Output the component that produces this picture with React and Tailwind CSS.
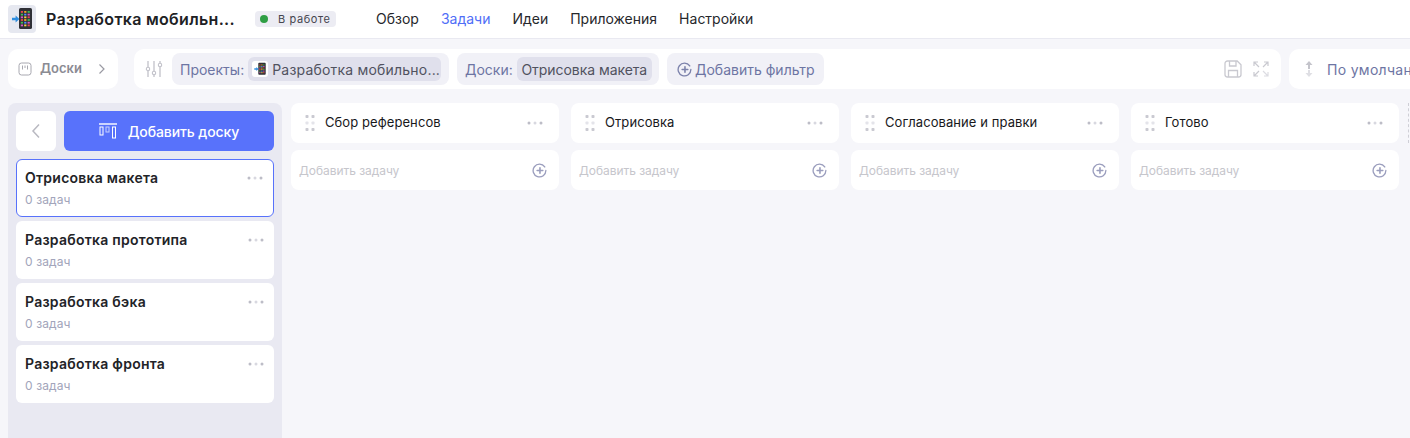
import React from 'react';

const boards = ['Отрисовка макета', 'Разработка прототипа', 'Разработка бэка', 'Разработка фронта'];
const columns = ['Сбор референсов', 'Отрисовка', 'Согласование и правки', 'Готово'];
const nav = ['Обзор', 'Задачи', 'Идеи', 'Приложения', 'Настройки'];

function PhoneEmoji({ className }) {
  const colors = ['#e5484d', '#f5a623', '#3fb950', '#4c8dff', '#d957c5', '#f5d742'];
  const cells = [];
  for (let r = 0; r < 6; r++) {
    for (let c = 0; c < 3; c++) {
      cells.push(
        <rect key={`${r}-${c}`} x={12.8 + c * 3.4} y={6 + r * 2.7} width="2.2" height="1.8" fill={colors[(r * 2 + c) % 6]} />
      );
    }
  }
  return (
    <svg viewBox="0 0 28 28" className={className}>
      <rect x="11" y="3" width="13" height="21" rx="1.6" fill="#2f3036" />
      {cells}
      <path d="M4 12.7h3.6V10.4L11.4 14l-3.8 3.6v-2.3H4z" fill="#2f8ee0" />
    </svg>
  );
}

function Dots({ className = '' }) {
  return (
    <svg viewBox="0 0 16 4" className={`w-4 h-1 ${className}`}>
      <circle cx="2" cy="2" r="1.5" fill="#bdbdc7" />
      <circle cx="8" cy="2" r="1.5" fill="#d8d8e0" />
      <circle cx="14" cy="2" r="1.5" fill="#bdbdc7" />
    </svg>
  );
}

function Grip() {
  return (
    <svg viewBox="0 0 10 16" className="w-[10px] h-4">
      {[1.5, 8, 14.5].map((y, i) =>
        [2, 8].map((x) => <rect key={`${x}-${y}`} x={x - 1.5} y={y - 1.5} width="3" height="3" rx="0.8" fill={i === 1 ? '#e4e4ea' : '#cacad2'} />)
      )}
    </svg>
  );
}

function PlusCircle({ className, color = '#9a9dbd' }) {
  return (
    <svg viewBox="0 0 16 16" fill="none" className={className}>
      <path d="M13.6 4.2A6.8 6.8 0 1 0 14.800 8" stroke={color} strokeWidth="1.4" strokeLinecap="round" />
      <path d="M8.500 5v6M5.500 8h6" stroke={color} strokeWidth="1.7" strokeLinecap="round" />
    </svg>
  );
}

export default function App() {
  return (
    <div className="w-[1410px] h-[438px] overflow-hidden flex flex-col bg-[#f6f6fa] font-['Inter',sans-serif]">
      {/* Header */}
      <header className="h-[39px] shrink-0 bg-white border-b border-[#e9e9f1] flex items-center pl-2">
        <div className="w-7 h-7 rounded bg-[#e6e8f0] shrink-0">
          <PhoneEmoji className="w-7 h-7" />
        </div>
        <h1 className="ml-2.5 w-[189px] text-base leading-5 font-semibold tracking-[0.3px] text-[#202124] whitespace-nowrap">Разработка мобильн...</h1>
        <div className="ml-[20px] w-[81px] h-4 rounded bg-[#ececf3] flex items-center pl-[5px] text-[11px] tracking-[0.6px] text-[#45464f]">
          <span className="w-2 h-2 rounded-full bg-[#2f9e44]" />
          <span className="ml-[10px]">В работе</span>
        </div>
        <nav className="ml-10 flex gap-[22px] text-[14px] leading-5 text-[#26272b]">
          {nav.map((item) => (
            <span key={item} className={item === 'Задачи' ? 'text-[#4f6ef7]' : ''}>{item}</span>
          ))}
        </nav>
      </header>

      {/* Toolbar */}
      <div className="mt-2.5 h-10 shrink-0 flex pl-2">
        <div className="w-[110px] shrink-0 rounded-[10px] bg-white flex items-center pl-[10px] text-[13px] font-semibold text-[#8b8b93]">
          <svg viewBox="0 0 14 14" fill="none" className="w-[14px] h-[14px]">
            <rect x="1" y="1" width="12" height="12" rx="2.5" stroke="#a8a8b0" strokeWidth="1" />
            <path d="M4.500 3.500v4M7 3.500v2.500M9.500 3.500v4" stroke="#a8a8b0" strokeWidth="1" />
          </svg>
          <span className="ml-2">Доски</span>
          <svg viewBox="0 0 8 12" fill="none" className="ml-4 w-2 h-3">
            <path d="M1.500 1.500 6 6l-4.500 4.500" stroke="#9a9aa3" strokeWidth="1.2" />
          </svg>
        </div>

        <div className="ml-4 w-[1147px] shrink-0 rounded-[10px] bg-white flex items-center pl-[11px] pr-[12px] text-[14px] text-[#6d75a3]">
          <svg viewBox="0 0 18 18" fill="none" className="w-[18px] h-[18px] shrink-0">
            <path d="M3 1v6M3 11v6M9 1v10M9 15v2M15 1v2M15 7v10" stroke="#c2c2ca" strokeWidth="1.3" />
            <circle cx="3" cy="9" r="1.7" stroke="#c2c2ca" strokeWidth="1.1" />
            <circle cx="9" cy="13" r="1.7" stroke="#c2c2ca" strokeWidth="1.1" />
            <circle cx="15" cy="5" r="1.7" stroke="#c2c2ca" strokeWidth="1.1" />
          </svg>
          <div className="ml-[9px] w-[277px] h-8 rounded-lg bg-[#f1f1f7] flex items-center pl-2">
            <span>Проекты:</span>
            <div className="ml-1 w-[193px] h-6 rounded-md bg-[#e0e0ec] flex items-center pl-1 text-[#50525f] whitespace-nowrap">
              <span className="w-4 h-4 rounded-[3px] bg-white shrink-0">
                <PhoneEmoji className="w-4 h-4" />
              </span>
              <span className="ml-1 tracking-[0.2px]">Разработка мобильно...</span>
            </div>
          </div>
          <div className="ml-2 w-[202px] h-8 rounded-lg bg-[#f1f1f7] flex items-center pl-2">
            <span>Доски:</span>
            <div className="ml-1 w-[135px] h-6 rounded-md bg-[#e0e0ec] flex items-center justify-center text-[#50525f] whitespace-nowrap tracking-[-0.05px]">Отрисовка макета</div>
          </div>
          <div className="ml-2 w-[157px] h-8 rounded-lg bg-[#f1f1f7] flex items-center pl-2.5">
            <PlusCircle className="w-[15px] h-[15px]" color="#7c82ab" />
            <span className="ml-[3px]">Добавить фильтр</span>
          </div>
          <div className="ml-auto flex items-center gap-[11px]">
            <svg viewBox="0 0 18 18" fill="none" className="w-[18px] h-[18px]">
              <path d="M3.500 1h9.700l3.800 3.800v9.700a2.500 2.500 0 0 1-2.500 2.500h-11A2.500 2.500 0 0 1 1 14.500v-11A2.500 2.500 0 0 1 3.500 1z" stroke="#c9c9d0" strokeWidth="1.3" />
              <path d="M5.500 1v5h6.500V1M4.500 17v-6.500h9V17" stroke="#c9c9d0" strokeWidth="1.3" />
            </svg>
            <svg viewBox="0 0 16 16" fill="none" className="w-4 h-4">
              <path d="M1 5V1h4M1 1l5 5" stroke="#c9c9d0" strokeWidth="1.2" />
              <path d="M15 5V1h-4M15 1l-5 5" stroke="#c9c9d0" strokeWidth="1.2" />
              <path d="M1 11v4h4M1 15l5-5" stroke="#c9c9d0" strokeWidth="1.2" />
              <path d="M15 11v4h-4M15 15l-5-5" stroke="#dcdce2" strokeWidth="1.2" />
            </svg>
          </div>
        </div>

        <div className="ml-2 w-[200px] shrink-0 rounded-[10px] bg-white flex items-center pl-[16px] text-[14px] text-[#6d75a3] whitespace-nowrap">
          <svg viewBox="0 0 8 18" fill="none" className="w-2 h-[18px] shrink-0">
            <path d="M4 4v5" stroke="#c4c4cb" strokeWidth="2" />
            <path d="M0.500 5 4 1l3.500 4z" fill="#c4c4cb" />
            <path d="M4 10v4" stroke="#dfdfe4" strokeWidth="2" />
            <path d="M0.500 13 4 17l3.500-4z" fill="#dfdfe4" />
          </svg>
          <span className="ml-[14px] tracking-[0.3px]">По умолчанию</span>
        </div>
      </div>

      {/* Body */}
      <div className="mt-[14px] flex-1 min-h-0 flex pl-2">
        <aside className="w-[274px] shrink-0 rounded-t-lg bg-[#e9e9f2] p-2 flex flex-col gap-1">
          <div className="flex gap-2 mb-1">
            <button className="w-10 h-10 rounded-md bg-white flex items-center justify-center">
              <svg viewBox="0 0 10 16" fill="none" className="w-2.5 h-4">
                <path d="M8 1.500 2 8l6 6.500" stroke="#b9b9c1" strokeWidth="1.5" />
              </svg>
            </button>
            <button className="flex-1 h-10 rounded-md bg-[#5872fb] flex items-center justify-center text-[14px] font-medium text-white">
              <svg viewBox="0 0 18 16" fill="none" className="w-[18px] h-4">
                <path d="M0 1h18" stroke="#fff" strokeWidth="1.4" />
                <rect x="1" y="4" width="3" height="8" stroke="#fff" strokeWidth="1" />
                <rect x="7" y="4" width="3" height="5" stroke="#c9d2ff" strokeWidth="1" />
                <rect x="13.500" y="4" width="3" height="11" stroke="#fff" strokeWidth="1" />
              </svg>
              <span className="ml-[11px] tracking-[-0.1px]">Добавить доску</span>
            </button>
          </div>
          {boards.map((title, i) => (
            <div
              key={title}
              className={`h-[58px] rounded-md bg-white px-[9px] pb-[1px] flex flex-col justify-center ${i === 0 ? 'border border-[#5872fb] pl-2' : ''}`}
            >
              <div className="flex items-center justify-between pr-[1px]">
                <span className="text-[14px] leading-5 font-semibold tracking-[0.25px] text-[#222327]">{title}</span>
                <Dots />
              </div>
              <span className="mt-[4px] text-[12px] leading-4 tracking-[0.1px] text-[#a2a5bb]">0 задач</span>
            </div>
          ))}
        </aside>

        <main className="ml-[9px] flex gap-3 items-start">
          {columns.map((title) => (
            <section key={title} className="w-[268px] shrink-0 flex flex-col gap-[7px]">
              <div className="h-10 rounded-lg bg-white flex items-center pl-[14px] pr-[16px]">
                <Grip />
                <span className="ml-[10px] text-[13px] tracking-[0.08px] text-[#18181b]">{title}</span>
                <Dots className="ml-auto" />
              </div>
              <div className="h-10 rounded-lg bg-white flex items-center pl-2 pr-[12px]">
                <span className="pt-[2px] text-[12px] tracking-[-0.05px] text-[#c6c6cc]">Добавить задачу</span>
                <PlusCircle className="ml-auto w-[15px] h-[15px]" />
              </div>
            </section>
          ))}
          <div className="ml-[-3px] w-0 h-10 border-l border-dashed border-[#cfcfd6]" />
        </main>
      </div>
    </div>
  );
}
